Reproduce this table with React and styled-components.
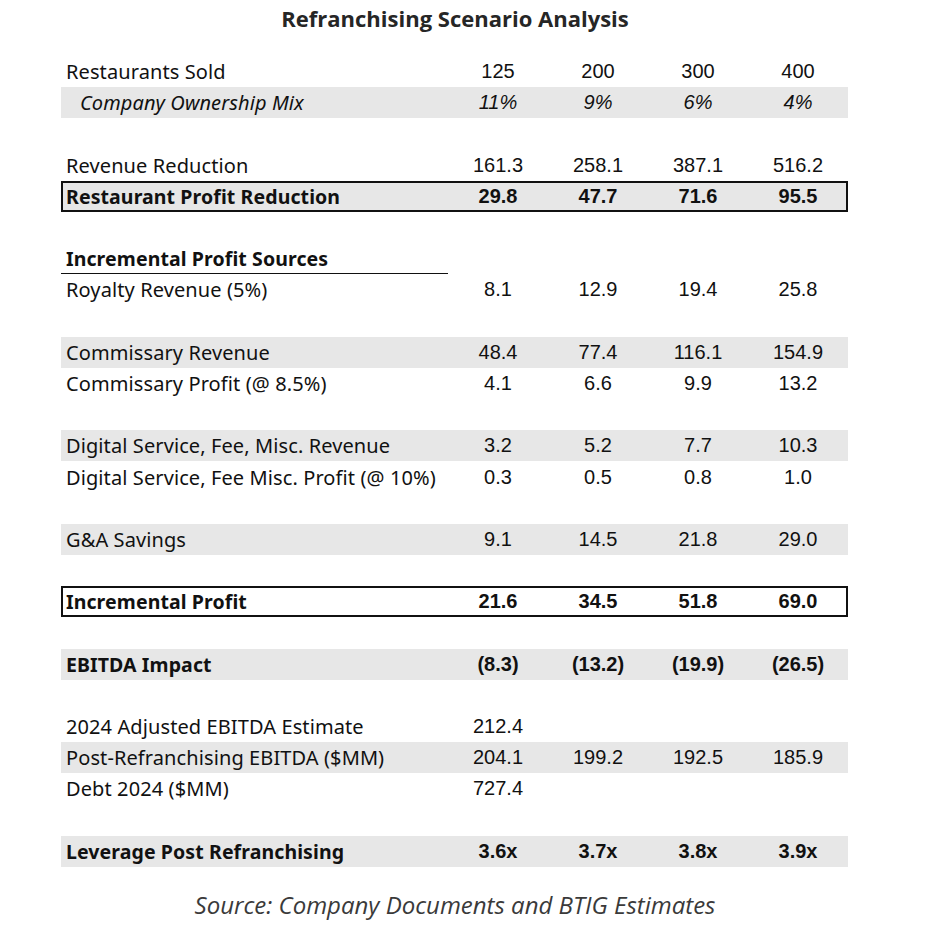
import React from "react";
import styled, { createGlobalStyle } from "styled-components";

const rows = [
  { label: "Restaurants Sold", values: ["125", "200", "300", "400"] },
  { label: "Company Ownership Mix", values: ["11%", "9%", "6%", "4%"], shade: true, italic: true, indent: true },
  null,
  { label: "Revenue Reduction", values: ["161.3", "258.1", "387.1", "516.2"] },
  { label: "Restaurant Profit Reduction", values: ["29.8", "47.7", "71.6", "95.5"], shade: true, bold: true, boxed: true },
  null,
  { label: "Incremental Profit Sources", values: [], bold: true, underline: true },
  { label: "Royalty Revenue (5%)", values: ["8.1", "12.9", "19.4", "25.8"] },
  null,
  { label: "Commissary Revenue", values: ["48.4", "77.4", "116.1", "154.9"], shade: true },
  { label: "Commissary Profit (@ 8.5%)", values: ["4.1", "6.6", "9.9", "13.2"] },
  null,
  { label: "Digital Service, Fee, Misc. Revenue", values: ["3.2", "5.2", "7.7", "10.3"], shade: true },
  { label: "Digital Service, Fee Misc. Profit (@ 10%)", values: ["0.3", "0.5", "0.8", "1.0"] },
  null,
  { label: "G&A Savings", values: ["9.1", "14.5", "21.8", "29.0"], shade: true },
  null,
  { label: "Incremental Profit", values: ["21.6", "34.5", "51.8", "69.0"], bold: true, boxed: true },
  null,
  { label: "EBITDA Impact", values: ["(8.3)", "(13.2)", "(19.9)", "(26.5)"], shade: true, bold: true },
  null,
  { label: "2024 Adjusted EBITDA Estimate", values: ["212.4"] },
  { label: "Post-Refranchising EBITDA ($MM)", values: ["204.1", "199.2", "192.5", "185.9"], shade: true },
  { label: "Debt 2024 ($MM)", values: ["727.4"] },
  null,
  { label: "Leverage Post Refranchising", values: ["3.6x", "3.7x", "3.8x", "3.9x"], shade: true, bold: true },
];

function App() {
  return (
    <Page>
      <GlobalStyle />
      <Title>Refranchising Scenario Analysis</Title>
      <Table>
        {rows.map((row, i) => {
          if (!row) return <Gap key={i} />;
          return (
            <Row key={i} $shade={row.shade} $boxed={row.boxed}>
              <Label $bold={row.bold} $italic={row.italic} $indent={row.indent} $underline={row.underline}>
                {row.label}
              </Label>
              {[0, 1, 2, 3].map((c) => (
                <Num key={c} $bold={row.bold} $italic={row.italic}>
                  {row.values[c] || ""}
                </Num>
              ))}
            </Row>
          );
        })}
      </Table>
      <Source>Source: Company Documents and BTIG Estimates</Source>
    </Page>
  );
}

export default App;

const GlobalStyle = createGlobalStyle`
  body {
    margin: 0;
    background: #ffffff;
  }
`;

const Page = styled.div`
  width: 928px;
  height: 942px;
  background: #ffffff;
  display: flex;
  flex-direction: column;
`;

const Title = styled.h1`
  margin: 0;
  padding-right: 18px;
  height: 36px;
  line-height: 36px;
  text-align: center;
  font-family: "Open Sans", sans-serif;
  font-weight: 700;
  font-size: 22px;
  color: #262626;
`;

const Table = styled.div`
  margin: 20px 0 0 61px;
  width: 787px;
  display: flex;
  flex-direction: column;
`;

const Gap = styled.div`
  height: 31.2px;
`;

const Row = styled.div`
  height: 31.2px;
  display: grid;
  grid-template-columns: 387px repeat(4, 100px);
  align-items: stretch;
  background: ${(p) => (p.$shade ? "#e7e7e7" : "transparent")};
  box-shadow: ${(p) => (p.$boxed ? "inset 0 0 0 2px #111" : "none")};
`;

const Label = styled.div`
  display: flex;
  align-items: center;
  padding-left: ${(p) => (p.$indent ? "19px" : "5px")};
  font-family: "Noto Sans", sans-serif;
  font-size: ${(p) => (p.$bold ? "19.5px" : "20px")};
  letter-spacing: 0.1px;
  font-weight: ${(p) => (p.$bold ? 700 : 400)};
  font-style: ${(p) => (p.$italic ? "italic" : "normal")};
  color: #111;
  white-space: nowrap;
  border-bottom: ${(p) => (p.$underline ? "1.5px solid #111" : "none")};
`;

const Num = styled.div`
  display: flex;
  align-items: center;
  justify-content: center;
  font-family: "Liberation Sans", Arial, sans-serif;
  font-size: 20px;
  font-weight: ${(p) => (p.$bold ? 700 : 400)};
  font-style: ${(p) => (p.$italic ? "italic" : "normal")};
  color: #111;
`;

const Source = styled.div`
  margin-top: 23px;
  padding-right: 18px;
  height: 30px;
  line-height: 30px;
  text-align: center;
  font-family: "Open Sans", sans-serif;
  font-style: italic;
  font-size: 24px;
  color: #3a3a3a;
`;
